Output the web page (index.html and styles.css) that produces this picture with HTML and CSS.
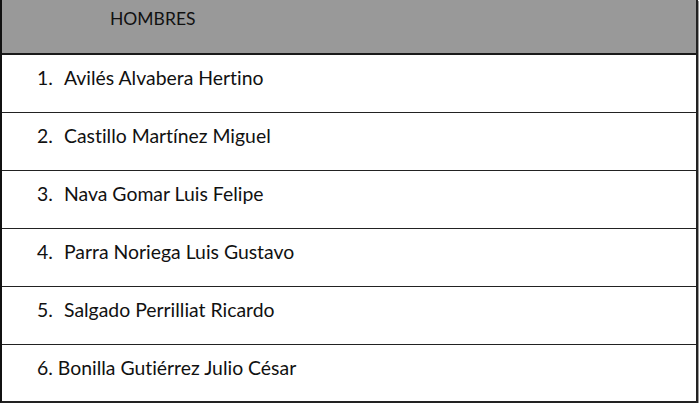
FILE: index.html
```html
<!DOCTYPE html>
<html lang="es">
<head>
<meta charset="utf-8">
<link rel="stylesheet" href="styles.css">
</head>
<body>
<div class="table">
  <div class="head">HOMBRES</div>
  <div class="row"><span class="num">1.</span>Avilés Alvabera Hertino</div>
  <div class="row"><span class="num">2.</span>Castillo Martínez Miguel</div>
  <div class="row"><span class="num">3.</span>Nava Gomar Luis Felipe</div>
  <div class="row"><span class="num">4.</span>Parra Noriega Luis Gustavo</div>
  <div class="row"><span class="num">5.</span>Salgado Perrilliat Ricardo</div>
  <div class="row last">6. Bonilla Gutiérrez Julio César</div>
</div>
</body>
</html>
```
FILE: styles.css
```css
html, body {
  margin: 0;
  padding: 0;
  background: #ffffff;
}
body {
  font-family: "Lato", "Open Sans", sans-serif;
  color: #111111;
  font-variant-ligatures: none;
}
.table {
  width: 694px;
  border-left: 2px solid #111;
  border-right: 2px solid #222;
  border-bottom: 2px solid #222;
  box-shadow: 1px 1px 0 #999;
}
.head {
  background: #999999;
  border-bottom: 2px solid #1a1a1a;
  box-sizing: border-box;
  height: 55px;
  padding: 9px 0 0 108px;
  font-size: 17.5px;
  line-height: 20px;
}
.row {
  height: 58px;
  box-sizing: border-box;
  border-bottom: 1px solid #222;
  padding: 11px 0 0 35px;
  font-size: 19.4px;
  line-height: 23px;
}
.row.last {
  border-bottom: none;
  height: 56px;
}
.num {
  display: inline-block;
  width: 27px;
}
```
